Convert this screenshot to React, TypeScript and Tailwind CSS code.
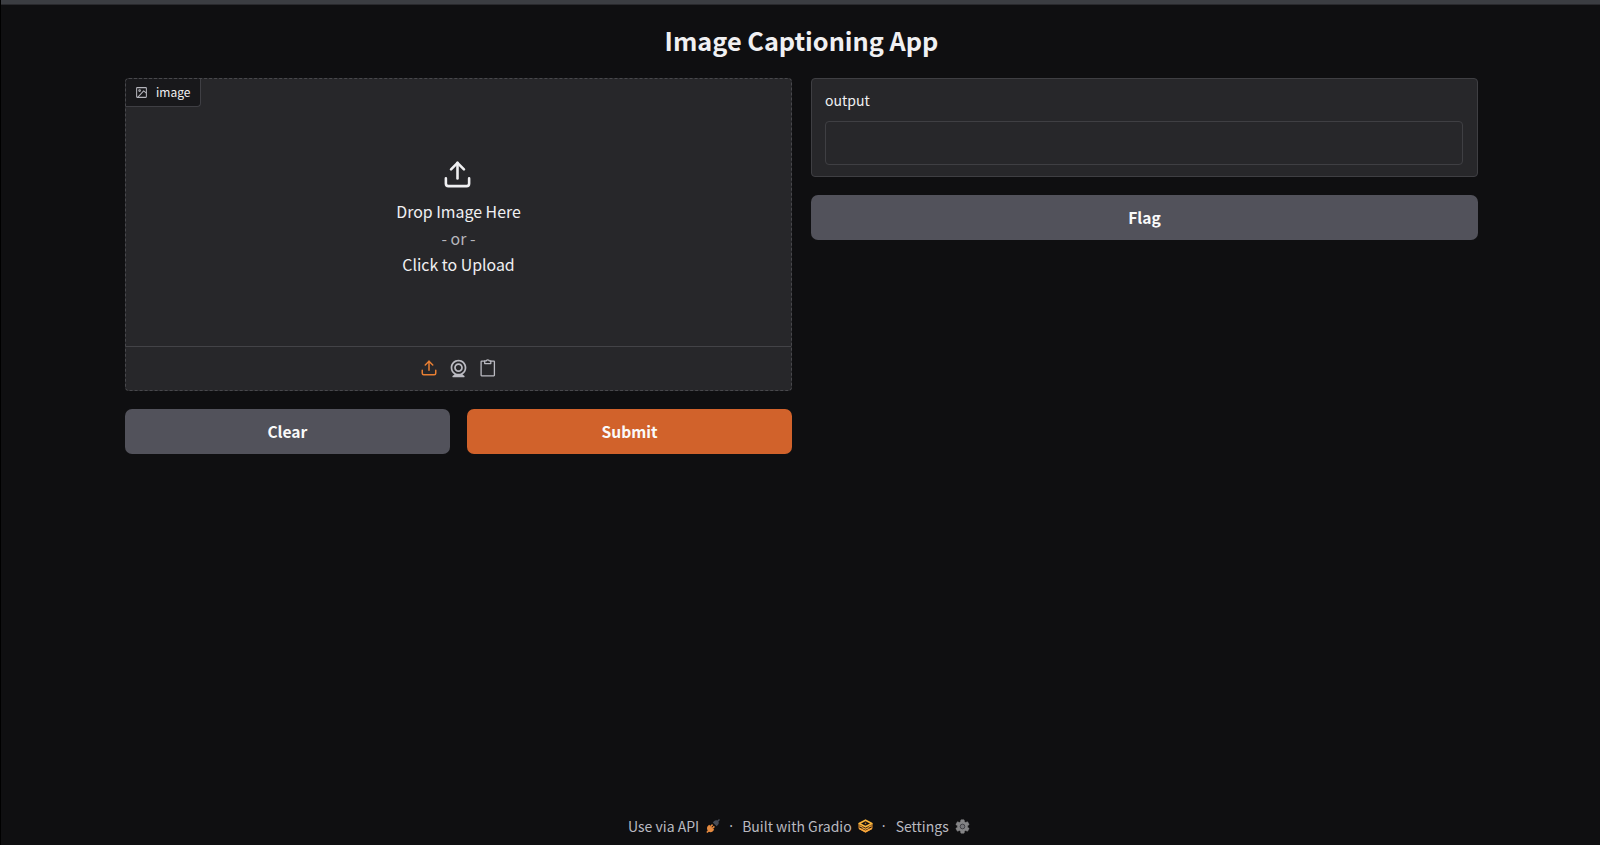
import React from "react";

function UploadIcon({ className }: { className: string }) {
  return (
    <svg viewBox="0 0 24 24" fill="none" stroke="currentColor" strokeWidth="2" strokeLinecap="round" strokeLinejoin="round" className={className}>
      <path d="M21 15v4a2 2 0 0 1-2 2H5a2 2 0 0 1-2-2v-4" />
      <polyline points="17 8 12 3 7 8" />
      <line x1="12" y1="3" x2="12" y2="15" />
    </svg>
  );
}

function WebcamIcon({ className }: { className: string }) {
  return (
    <svg viewBox="0 0 24 24" fill="currentColor" className={className}>
      <path d="M12 2c-4.963 0-9 4.038-9 9c0 3.328 1.82 6.232 4.513 7.79l-2.067 1.378A1 1 0 0 0 6 22h12a1 1 0 0 0 .555-1.832l-2.067-1.378C19.18 17.232 21 14.328 21 11c0-4.962-4.037-9-9-9m0 16c-3.859 0-7-3.141-7-7c0-3.86 3.141-7 7-7s7 3.14 7 7c0 3.859-3.141 7-7 7" />
      <path d="M12 6c-2.757 0-5 2.243-5 5s2.243 5 5 5s5-2.243 5-5s-2.243-5-5-5m0 8c-1.654 0-3-1.346-3-3s1.346-3 3-3s3 1.346 3 3s-1.346 3-3 3" />
    </svg>
  );
}

function ClipboardIcon({ className }: { className: string }) {
  return (
    <svg viewBox="0 0 16 18" fill="none" stroke="currentColor" strokeWidth="1.3" strokeLinejoin="round" className={className}>
      <path d="M5 2.2H1.6a.5.5 0 0 0-.5.5v13.6a.5.5 0 0 0 .5.5h12.3a.5.5 0 0 0 .5-.5V2.7a.5.5 0 0 0-.5-.5H10.5" />
      <path d="M4.7 1.9h1.5C6.3 1.1 6.9.8 7.75.8s1.45.3 1.55 1.1h1.5v2.7H4.7z" />
    </svg>
  );
}

function ImageIcon({ className }: { className: string }) {
  return (
    <svg viewBox="0 0 24 24" fill="none" stroke="currentColor" strokeWidth="1.9" strokeLinecap="round" strokeLinejoin="round" className={className}>
      <rect x="3" y="3" width="18" height="18" rx="1" ry="1" />
      <circle cx="8.5" cy="8.5" r="1.5" />
      <polyline points="21 13 16 9 5 21" />
    </svg>
  );
}

function PlugIcon() {
  return (
    <svg viewBox="0 0 14 14" className="h-[14px] w-[14px]">
      <path d="M1.6 7.3 3.2 5.8l5 5-1.6 1.6c-1.1 1-2.6 1-3.7.3L1.4 14 .3 12.9l1.4-1.4C.9 10.2.7 8.4 1.6 7.3z" fill="#e58a40" />
      <path d="m4.6 7.6 2-2M6.4 9.4l2-2" stroke="#e58a40" strokeWidth="1.5" />
      <path d="m6.8 3.4 3.8 3.8 1.4-1.4c.9-.9 1-2.2.4-3.2L14 1 13 0l-1.600 1.600c-1-.6-2.300-.5-3.200.4z" fill="#474c57" />
    </svg>
  );
}

function GradioIcon() {
  return (
    <svg viewBox="0 0 15 14" fill="none" strokeLinejoin="round" className="h-[14px] w-[15px]">
      <path d="M1 4.500v5l6.500 3.400L14 9.500v-5" stroke="#e8912f" strokeWidth="1" />
      <path d="M1.200 9.300 7.500 12.600l6.300-3.300" stroke="#f9a63a" strokeWidth="1.800" />
      <path d="M7.500 1.200 13.800 4.500 7.500 7.800 1.200 4.500z" stroke="#fbb63c" strokeWidth="1.700" />
      <path d="M7.500 3.600v1.600" stroke="#c07a2a" strokeWidth="1.500" />
      <path d="M1.500 6.600 4.500 8.200M13.500 6.600 10.500 8.200M4.300 8.600l3.200 1.700 3.200-1.700" stroke="#f9a63a" strokeWidth="1.200" />
    </svg>
  );
}

function GearIcon() {
  return (
    <svg viewBox="0 0 24 24" className="h-[17px] w-[17px]">
      <path
        d="M19.14 12.94c.04-.3.06-.61.06-.94 0-.32-.02-.64-.07-.94l2.03-1.58c.18-.14.23-.41.12-.61l-1.92-3.32c-.12-.22-.37-.29-.59-.22l-2.39.96c-.5-.38-1.03-.7-1.62-.94l-.36-2.54c-.04-.24-.24-.41-.48-.41h-3.84c-.24 0-.43.17-.47.41l-.36 2.54c-.59.24-1.13.57-1.62.94l-2.39-.96c-.22-.08-.47 0-.59.22L2.74 8.87c-.12.21-.08.47.12.61l2.03 1.58c-.05.3-.09.63-.09.94s.02.64.07.94l-2.03 1.58c-.18.14-.23.41-.12.61l1.92 3.32c.12.22.37.29.59.22l2.39-.96c.5.38 1.03.7 1.62.94l.36 2.54c.05.24.24.41.48.41h3.84c.24 0 .44-.17.47-.41l.36-2.54c.59-.24 1.13-.56 1.62-.94l2.39.96c.22.08.47 0 .59-.22l1.92-3.32c.12-.22.07-.47-.12-.61z"
        fill="#848486"
        stroke="#848486"
        strokeWidth="0.7"
        strokeLinejoin="round"
      />
      <circle cx="12" cy="12" r="3.3" fill="#77777b" stroke="#414145" strokeWidth="1.4" />
    </svg>
  );
}

function Button({ label, className }: { label: string; className: string }) {
  return (
    <button className={`h-[45px] rounded-[7px] text-[15.6px] leading-[45px] font-bold text-[#fafafa] ${className}`}>{label}</button>
  );
}

function Dot() {
  return <span className="w-[22px] text-center font-['Noto_Sans',sans-serif]">·</span>;
}

export default function App() {
  return (
    <div className="flex h-[845px] w-[1600px] flex-col overflow-hidden border-l border-black bg-[#0f0f11] font-['Noto_Sans_CJK_SC','Noto_Sans',sans-serif] text-[#f0f0f2]">
      <div className="h-[5px] shrink-0 border-b border-[#29292d] bg-[#3b3d42]" />
      <h1 className="mt-[17px] h-[38px] pb-px pl-[2px] text-center text-[25.3px] leading-[37px] font-bold">Image Captioning App</h1>

      <main className="mt-[18px] flex items-start gap-[19px] pl-[124px]">
        <section className="flex w-[667px] flex-col gap-[18px]">
          <div className="flex h-[313px] flex-col rounded-[4px] border border-dashed border-[#48484c] bg-[#27272a]">
            <div className="flex h-[28px] w-[75px] items-center gap-[8px] rounded-tl-[3px] rounded-br-[4px] border-r border-b border-[#3f3f44] bg-[#18181b] pl-[9px]">
              <ImageIcon className="h-[13px] w-[13px] text-[#b4b4bb]" />
              <span className="pb-px text-[12px] leading-[26px]">image</span>
            </div>
            <div className="flex flex-1 flex-col items-center pt-[52px] text-[15.9px] leading-[27px]">
              <UploadIcon className="mr-[3px] mb-[8px] h-[31px] w-[31px] shrink-0" />
              <span>Drop Image Here</span>
              <span className="text-[#b6b6bc]">- or -</span>
              <span className="-mt-px">Click to Upload</span>
            </div>
            <div className="flex h-[44px] items-center justify-center border-t border-[#434347] pb-px text-[#bbbbc2]">
              <UploadIcon className="mr-[10px] h-[18px] w-[18px] text-[#e87f33]" />
              <WebcamIcon className="mr-[11px] h-[21px] w-[21px]" />
              <ClipboardIcon className="mr-px h-[18px] w-[16px]" />
            </div>
          </div>
          <div className="flex gap-[17.5px]">
            <Button label="Clear" className="flex-1 bg-[#52525b]" />
            <Button label="Submit" className="flex-1 bg-[#d1622b]" />
          </div>
        </section>

        <section className="flex w-[667px] flex-col gap-[18px]">
          <div className="h-[99px] rounded-[4px] border border-[#3f3f43] bg-[#27272a] pt-[10px] pr-[14px] pl-[13px]">
            <label className="block h-[32px] text-[14px] leading-[22px]">output</label>
            <input className="block h-[44px] w-full rounded-[4px] border border-[#3f3f43] bg-transparent" />
          </div>
          <Button label="Flag" className="w-full bg-[#52525b]" />
        </section>
      </main>

      <footer className="mt-auto mb-[7px] flex h-[24px] items-center pl-[627px] text-[14px] leading-[24px] text-[#b9b9c0]">
        <span className="mr-[7px]">Use via API</span>
        <PlugIcon />
        <Dot />
        <span className="mr-[6px]">Built with Gradio</span>
        <GradioIcon />
        <Dot />
        <span className="mr-[5px] ml-px">Settings</span>
        <GearIcon />
      </footer>
    </div>
  );
}
